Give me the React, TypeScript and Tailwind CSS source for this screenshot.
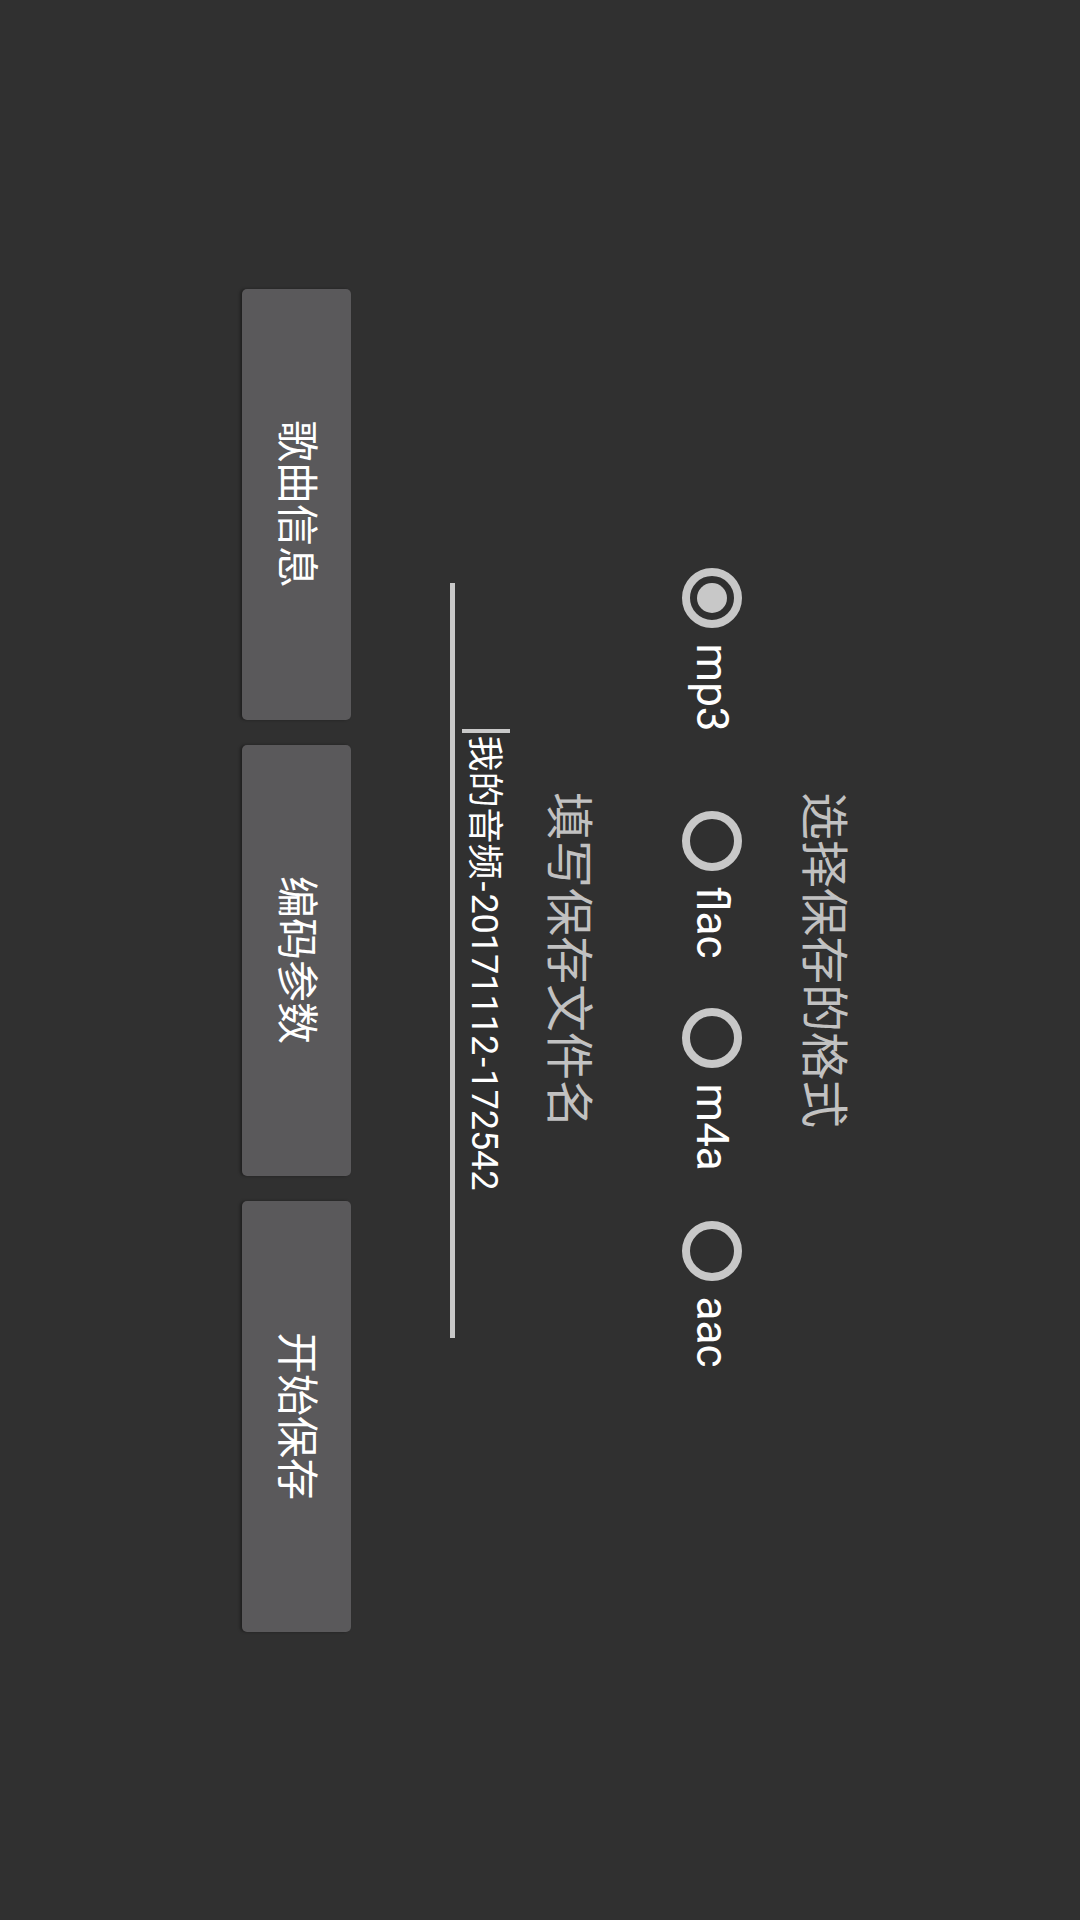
import { useState } from 'react'

const formats = [
  { id: 'mp3', width: 'w-[243px]' },
  { id: 'flac', width: 'w-[197px]' },
  { id: 'm4a', width: 'w-[213px]' },
  { id: 'aac', width: '' },
]

const actions = ['歌曲信息', '编码参数', '开始保存']

function Radio({ checked }: { checked: boolean }) {
  return (
    <span className="flex h-[60px] w-[60px] shrink-0 items-center justify-center rounded-full border-[8px] border-[#c8c8c8]">
      {checked && <span className="h-[30px] w-[30px] rounded-full bg-[#c8c8c8]" />}
    </span>
  )
}

export default function App() {
  const [format, setFormat] = useState('mp3')
  const [name] = useState('我的音频-20171112-172542')
  const parts = name.split('-')

  return (
    <div className="h-[1920px] w-[1080px] overflow-hidden bg-[#303030] font-['Roboto','Noto_Sans_CJK_SC',sans-serif]">
      {/* landscape screen, turned a quarter clockwise */}
      <div className="flex h-[1080px] w-[1920px] origin-top-left translate-x-[1080px] rotate-90 flex-col items-center pt-[233px]">
        <p className="text-[48px] leading-none text-[#c1c1c1]">选择保存的格式</p>

        <div className="mt-[57px] ml-[15px] flex items-center">
          {formats.map((f) => (
            <button
              key={f.id}
              onClick={() => setFormat(f.id)}
              className={`flex items-center ${f.width}`}
            >
              <Radio checked={format === f.id} />
              <span className="ml-[16px] text-[44px] leading-none text-white">{f.id}</span>
            </button>
          ))}
        </div>

        <p className="mt-[90px] text-[48px] leading-none text-[#c1c1c1]">填写保存文件名</p>

        <div className="mt-[34px] flex w-[755px] flex-col items-center">
          <div className="flex h-[48px] items-center">
            <span className="h-[48px] w-[4px] bg-[#c8c8c8]" />
            <span className="ml-[2px] pt-[4px] text-[36px] leading-none text-white">
              {parts.map((p, i) => (
                <span key={i}>
                  {i > 0 && <span className="mx-[2px]">-</span>}
                  {p}
                </span>
              ))}
            </span>
          </div>
          <div className="mt-[7px] h-[5px] w-full bg-[#c8c8c8]" />
        </div>

        <div className="mt-[99px] flex gap-[25px]">
          {actions.map((a) => (
            <button
              key={a}
              className="flex h-[109px] w-[431px] items-center justify-center rounded-[5px] bg-[#5a595b] text-[42px] leading-none text-white shadow-[0_2px_3px_rgba(0,0,0,0.35)]"
            >
              {a}
            </button>
          ))}
        </div>
      </div>
    </div>
  )
}
